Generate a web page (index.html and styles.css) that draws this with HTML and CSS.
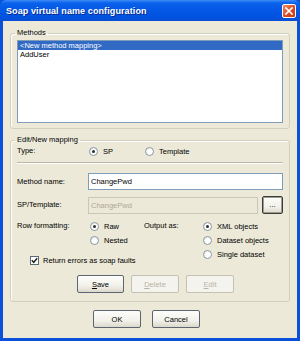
FILE: index.html
```html
<!DOCTYPE html>
<html lang="en">
<head>
  <meta charset="UTF-8">
  <title>Soap virtual name configuration</title>
  <link rel="stylesheet" href="styles.css">
</head>
<body>
  <div class="window">
    <div class="titlebar">
      <span class="title">Soap virtual name configuration</span>
      <span class="close">
        <svg width="8" height="8" viewBox="0 0 8 8"><path d="M1 1 L7 7 M7 1 L1 7" stroke="#fff" stroke-width="1.6" stroke-linecap="square"/></svg>
      </span>
    </div>

    <div class="client">
      <fieldset class="group">
        <legend>Methods</legend>
        <div class="listbox">
          <div class="item selected">&lt;New method mapping&gt;</div>
          <div class="item">AddUser</div>
        </div>
      </fieldset>

      <fieldset class="group edit">
        <legend>Edit/New mapping</legend>

        <div class="row type-row">
          <span class="label">Type:</span>
          <label class="opt sp"><span class="radio checked"></span>SP</label>
          <label class="opt"><span class="radio"></span>Template</label>
        </div>

        <div class="separator"></div>

        <div class="row field-row">
          <span class="label">Method name:</span>
          <div class="textbox">ChangePwd</div>
        </div>

        <div class="row field-row second">
          <span class="label">SP/Template:</span>
          <div class="textbox disabled">ChangePwd</div>
          <button class="btn browse">...</button>
        </div>

        <div class="format">
          <div class="format-left">
            <div class="row">
              <span class="label">Row formatting:</span>
              <div class="opts">
                <label class="opt"><span class="radio checked"></span>Raw</label>
                <label class="opt"><span class="radio"></span>Nested</label>
              </div>
            </div>
            <label class="check-row">
              <span class="checkbox">
                <svg width="7" height="7" viewBox="0 0 7 7"><path d="M0.8 3.3 L2.7 5.3 L6.2 1.2" fill="none" stroke="#21281c" stroke-width="1.5"/></svg>
              </span>
              Return errors as soap faults
            </label>
          </div>
          <div class="format-right">
            <span class="label out-label">Output as:</span>
            <div class="opts">
              <label class="opt"><span class="radio checked"></span>XML objects</label>
              <label class="opt"><span class="radio"></span>Dataset objects</label>
              <label class="opt"><span class="radio"></span>Single dataset</label>
            </div>
          </div>
        </div>

        <div class="actions">
          <button class="btn"><u>S</u>ave</button>
          <button class="btn" disabled><u>D</u>elete</button>
          <button class="btn" disabled><u>E</u>dit</button>
        </div>
      </fieldset>

      <div class="dialog-buttons">
        <button class="btn">OK</button>
        <button class="btn">Cancel</button>
      </div>
    </div>
  </div>
</body>
</html>
```

FILE: styles.css
```css
body {
  margin: 0;
  font-family: 'Liberation Sans', Arial, sans-serif;
  font-size: 7.5px;
  color: #000;
}

.window {
  width: 300px;
  height: 341px;
  box-sizing: border-box;
  display: flex;
  flex-direction: column;
  background: #0a50d8;
  padding: 0 3px 3px 3px;
}

.titlebar {
  height: 21px;
  margin: 0 -3px;
  padding: 0 4px 0 6px;
  display: flex;
  align-items: center;
  justify-content: space-between;
  background: linear-gradient(#3d8cf5 0, #0a62eb 3px, #0358e6 45%, #0053e0 80%, #0a4dd2 100%);
  border-radius: 6px 6px 0 0;
}

.title {
  color: #fff;
  font-weight: bold;
  font-size: 9px;
  letter-spacing: 0.1px;
  text-shadow: 1px 1px 0 #0a2a8c;
}

.close {
  width: 12px;
  height: 12px;
  margin-right: 0;
  border: 1px solid #fff;
  border-radius: 2px;
  background: linear-gradient(135deg, #f08a62, #d9481e 60%, #c8401a);
  display: flex;
  align-items: center;
  justify-content: center;
}

.client {
  flex: 1;
  background: #ece9d8;
  padding: 7px 7px 0 7px;
}

.group {
  margin: 0;
  padding: 2px 6px 5px 6px;
  border: 1px solid #d0d0bf;
  border-radius: 3px;
  box-shadow: inset 1px 1px 0 #fff;
}

.group legend {
  padding: 0 2px;
  margin-left: -2px;
  line-height: 10px;
  height: 10px;
}

.listbox {
  height: 81px;
  background: #fff;
  border: 1px solid #7f9db9;
}

.item {
  height: 9px;
  line-height: 9px;
  padding-left: 2px;
}

.item.selected {
  background: #316ac5;
  color: #fff;
}

.edit {
  margin-top: 6px;
  padding: 0 6px 8px 6px;
}

.row {
  display: flex;
  align-items: flex-start;
}

.label {
  width: 71px;
  flex-shrink: 0;
  line-height: 14px;
}

.type-row {
  height: 12px;
}

.type-row .label {
  line-height: 12px;
}

.opt {
  display: flex;
  align-items: center;
  height: 14px;
}

.type-row .opt {
  height: 12px;
}

.opt.sp {
  width: 56px;
}

.radio {
  width: 7px;
  height: 7px;
  margin: 0 5px 0 1px;
  border: 1px solid #8a9aa8;
  border-radius: 50%;
  background: radial-gradient(circle at 60% 60%, #fff 40%, #dcdcd4 100%);
  display: flex;
  align-items: center;
  justify-content: center;
}

.radio.checked::after {
  content: "";
  width: 3px;
  height: 3px;
  border-radius: 50%;
  background: #2a2f2a;
}

.separator {
  margin-top: 5px;
  height: 1px;
  border-bottom: 1px solid #fff;
  background: #b9b7aa;
}

.field-row {
  margin-top: 9px;
  align-items: center;
}

.field-row.second {
  margin-top: 6px;
}

.textbox {
  flex: 1;
  height: 15px;
  line-height: 15px;
  padding-left: 2px;
  background: #fff;
  border: 1px solid #7f9db9;
}

.textbox.disabled {
  background: #ece9d8;
  color: #aca899;
  border-color: #c9c7ba;
}

.btn {
  font-family: inherit;
  font-size: 7.5px;
  color: #000;
  width: 48px;
  height: 18px;
  padding: 0;
  border: 1px solid #5b6670;
  border-radius: 2px;
  background: linear-gradient(#fdfdfb, #f2f1ea 60%, #dcd8cc);
}

.btn:disabled {
  color: #b8b5a6;
  border-color: #c4c2b4;
  background: #f4f3ee;
}

.btn.browse {
  width: 21px;
  height: 18px;
  margin-left: 4px;
  border: 1px solid #3a3a3a;
  box-shadow: inset 0 0 0 1px #9d9d92;
  line-height: 8px;
}

.format {
  margin-top: 5px;
  display: flex;
}

.format-left {
  width: 127px;
}

.opts {
  display: flex;
  flex-direction: column;
}

.format-left .opt .radio {
  margin-left: 2px;
}

.format-right {
  display: flex;
}

.out-label {
  width: 57px;
}

.format-right .opt .radio {
  margin-left: 2px;
}

.check-row {
  margin-top: 6px;
  padding-left: 13px;
  height: 14px;
  display: flex;
  align-items: center;
}

.checkbox {
  width: 7px;
  height: 7px;
  margin-right: 4px;
  border: 1px solid #5c6a77;
  background: #fff;
  display: flex;
  align-items: center;
  justify-content: center;
}

.actions {
  margin-top: 8px;
  padding-left: 60px;
  display: flex;
  gap: 7px;
}

.actions .btn:first-child {
  width: 47px;
}

.dialog-buttons {
  margin-top: 8px;
  padding-left: 83px;
  display: flex;
  gap: 11px;
}
```
